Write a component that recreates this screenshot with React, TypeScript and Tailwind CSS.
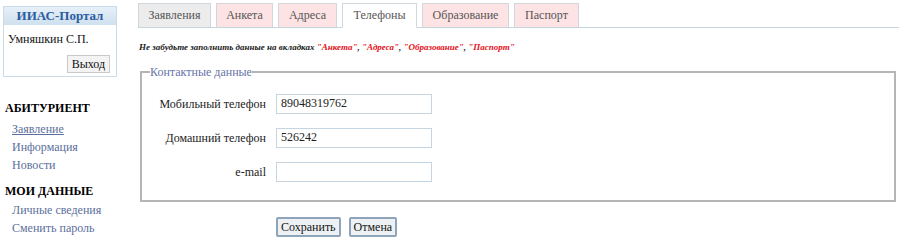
import { useState } from "react"

const tabs = [
  { name: "Заявления", bg: "bg-[#ececec]", w: "w-[73px]" },
  { name: "Анкета", bg: "bg-[#fde3e3]", w: "w-[57px]" },
  { name: "Адреса", bg: "bg-[#fde3e3]", w: "w-[59px]" },
  { name: "Телефоны", bg: "bg-white", w: "w-[75px]" },
  { name: "Образование", bg: "bg-[#fde3e3]", w: "w-[87px]" },
  { name: "Паспорт", bg: "bg-[#fde3e3]", w: "w-[65px]" },
]

const serif = "font-['Liberation_Serif','Times_New_Roman',serif]"

function Campo({ label, valor }: { label: string; valor: string }) {
  return (
    <div className="flex items-center h-[20px]">
      <label className={`${serif} w-[126px] text-right text-[12px] text-[#222] pr-[10px]`}>{label}</label>
      <input
        className={`${serif} w-[156px] h-[20px] border border-[#c5d6e2] px-[4px] text-[12px] text-[#222] outline-none`}
        defaultValue={valor}
      />
    </div>
  )
}

export default function App() {
  const [aba] = useState("Телефоны")

  return (
    <div className={`${serif} w-[899px] h-[244px] bg-white flex overflow-hidden`}>
      <aside className="w-[135px] shrink-0 pl-[3px] pt-[6px]">
        <div className="w-[114px] border border-[#c9dbe8]">
          <div className="h-[18px] bg-gradient-to-b from-[#e6f0f8] to-[#cfe0ee] text-center text-[13px] font-bold text-[#2b5da0] leading-[18px]">
            ИИАС-Портал
          </div>
          <div className="px-[4px] pt-[5px] text-[12px] text-[#111]">Умняшкин С.П.</div>
          <div className="flex justify-end pr-[6px] pt-[7px] pb-[3px]">
            <button className={`${serif} h-[18px] px-[4px] text-[12px] leading-[16px] border border-[#c9c9c9] bg-[#f3f3f3] text-[#111]`}>
              Выход
            </button>
          </div>
        </div>

        <div className="mt-[22px] pl-[2px] text-[12px] font-bold text-black">АБИТУРИЕНТ</div>
        <ul className={`${serif} pl-[9px] mt-[3px] text-[12px] text-[#5b6f9c] leading-[18px]`}>
          <li className="underline">Заявление</li>
          <li>Информация</li>
          <li>Новости</li>
        </ul>
        <div className="mt-[8px] pl-[2px] text-[12px] font-bold text-black">МОИ ДАННЫЕ</div>
        <ul className={`${serif} pl-[9px] mt-[1px] text-[12px] text-[#5b6f9c] leading-[18px]`}>
          <li>Личные сведения</li>
          <li>Сменить пароль</li>
        </ul>
      </aside>

      <main className="flex-1 pt-[3px] pl-[3px]">
        <div className="flex items-end gap-[5px] border-b border-[#c5d6de] h-[25px]">
          {tabs.map((t) => (
            <div
              key={t.name}
              className={`${t.w} ${t.bg} h-[24px] border border-[#d0d8dd] ${t.name === aba ? "border-b-white h-[25px] -mb-[1px]" : "border-b-0"} text-center text-[12px] leading-[22px] text-[#555]`}
            >
              {t.name}
            </div>
          ))}
        </div>

        <p className="mt-[13px] ml-[1px] text-[9px] italic font-bold text-[#222]">
          Не забудьте заполнить данные на вкладках <span className="text-[#e4101a]">"Анкета"</span>,{" "}
          <span className="text-[#e4101a]">"Адреса"</span>, <span className="text-[#e4101a]">"Образование"</span>,{" "}
          <span className="text-[#e4101a]">"Паспорт"</span>
        </p>

        <fieldset className="mt-[8px] ml-[2px] w-[756px] h-[139px] border-2 border-[#b5b5b5] px-[8px] pt-[13px]">
          <legend className={`${serif} text-[12px] text-[#6674a8]`}>Контактные данные</legend>
          <div className="flex flex-col gap-[14px]">
            <Campo label="Мобильный телефон" valor="89048319762" />
            <Campo label="Домашний телефон" valor="526242" />
            <Campo label="e-mail" valor="" />
          </div>
        </fieldset>

        <div className="flex gap-[8px] pl-[138px] mt-[15px]">
          <button className={`${serif} h-[20px] px-[3px] text-[12px] leading-[16px] border-2 border-[#8ea4ba] bg-[#eef1f4] text-[#111] rounded-[2px]`}>
            Сохранить
          </button>
          <button className={`${serif} h-[20px] px-[3px] text-[12px] leading-[16px] border-2 border-[#8ea4ba] bg-[#eef1f4] text-[#111] rounded-[2px]`}>
            Отмена
          </button>
        </div>
      </main>
    </div>
  )
}
